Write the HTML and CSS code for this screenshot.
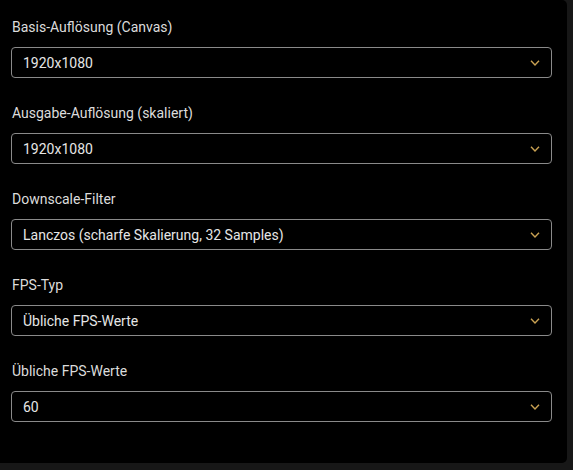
FILE: index.html
```html
<!DOCTYPE html>
<html lang="de">
<head>
<meta charset="utf-8">
<link rel="stylesheet" href="styles.css">
</head>
<body>
<div class="panel">
  <div class="field">
    <div class="label">Basis-Auflösung (Canvas)</div>
    <div class="select"><span class="value">1920x1080</span><svg class="chev" width="10" height="6" viewBox="0 0 10 6"><path d="M1 0.8 L5 5 L9 0.8" fill="none" stroke="#c9a152" stroke-width="1.4"/></svg></div>
  </div>
  <div class="field">
    <div class="label">Ausgabe-Auflösung (skaliert)</div>
    <div class="select"><span class="value">1920x1080</span><svg class="chev" width="10" height="6" viewBox="0 0 10 6"><path d="M1 0.8 L5 5 L9 0.8" fill="none" stroke="#c9a152" stroke-width="1.4"/></svg></div>
  </div>
  <div class="field">
    <div class="label">Downscale-Filter</div>
    <div class="select"><span class="value">Lanczos (scharfe Skalierung, 32 Samples)</span><svg class="chev" width="10" height="6" viewBox="0 0 10 6"><path d="M1 0.8 L5 5 L9 0.8" fill="none" stroke="#c9a152" stroke-width="1.4"/></svg></div>
  </div>
  <div class="field">
    <div class="label">FPS-Typ</div>
    <div class="select"><span class="value">Übliche FPS-Werte</span><svg class="chev" width="10" height="6" viewBox="0 0 10 6"><path d="M1 0.8 L5 5 L9 0.8" fill="none" stroke="#c9a152" stroke-width="1.4"/></svg></div>
  </div>
  <div class="field">
    <div class="label">Übliche FPS-Werte</div>
    <div class="select"><span class="value">60</span><svg class="chev" width="10" height="6" viewBox="0 0 10 6"><path d="M1 0.8 L5 5 L9 0.8" fill="none" stroke="#c9a152" stroke-width="1.4"/></svg></div>
  </div>
</div>
</body>
</html>
```
FILE: styles.css
```css
html, body {
  margin: 0;
  padding: 0;
  background: #171717;
  height: 100%;
}
body {
  font-family: Roboto, "Liberation Sans", sans-serif;
  font-size: 14px;
}
.panel {
  width: 567px;
  height: 463px;
  box-sizing: border-box;
  background: #000;
  border-radius: 0 5px 5px 0;
  padding: 19px 15px 0 11px;
  display: flex;
  flex-direction: column;
  gap: 27px;
}
.field {
  display: flex;
  flex-direction: column;
  gap: 12px;
}
.label {
  color: #dcdcdc;
  line-height: 16px;
  padding-left: 1px;
}
.select {
  height: 31px;
  box-sizing: border-box;
  border: 1px solid #8a8a8a;
  border-radius: 4px;
  display: flex;
  align-items: center;
  justify-content: space-between;
  padding: 0 11px 0 11px;
}
.value {
  color: #e6e6e6;
}
.chev {
  display: block;
}
```
